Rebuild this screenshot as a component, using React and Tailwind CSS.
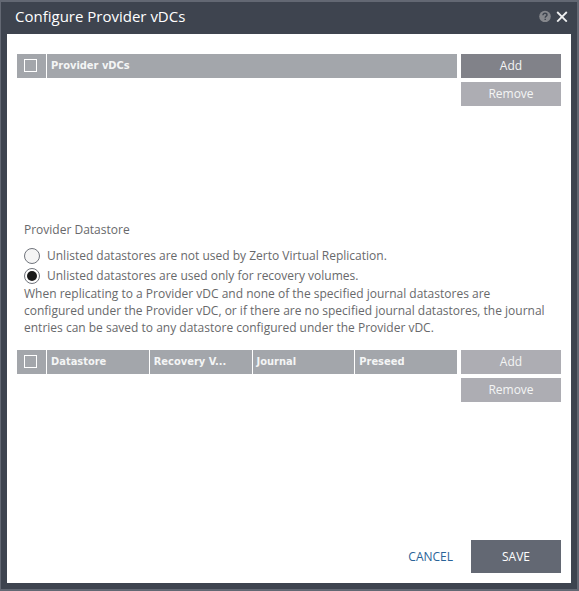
import { useState } from "react";

function HeaderCheckbox({ label }) {
  return (
    <input
      type="checkbox"
      aria-label={label}
      className="mx-[7px] mt-[5px] block size-[13px] appearance-none border border-white checked:bg-white"
    />
  );
}

function ListTable({ name, columns }) {
  return (
    <div className="min-w-0 flex-1">
      <table className="w-full table-fixed border-separate border-spacing-0 bg-[#a3a6ab] text-[11px] leading-4 text-[#f4f5f5]">
        <thead>
          <tr>
            <th scope="col" className="h-6 w-[29px] p-0 align-top">
              <HeaderCheckbox label={`Select all ${name}`} />
            </th>
            {columns.map((column) => (
              <th
                key={column}
                scope="col"
                className="h-6 truncate border-l border-white py-0 pr-2 pl-1 text-left font-['DejaVu_Sans_Condensed','DejaVu_Sans',sans-serif] font-bold"
              >
                {column}
              </th>
            ))}
          </tr>
        </thead>
      </table>
    </div>
  );
}

function ListActions({ addClass }) {
  return (
    <div className="flex w-[100px] shrink-0 flex-col gap-1 leading-4 text-[#f4f5f5]">
      <button type="button" className={`h-6 ${addClass}`}>
        Add
      </button>
      <button type="button" className="h-6 bg-[#adadb3]">
        Remove
      </button>
    </div>
  );
}

function RadioOption({ value, selected, onSelect, children }) {
  return (
    <label className="flex h-[18px] items-center gap-[7px] leading-4">
      <input
        type="radio"
        name="unlisted-datastores"
        value={value}
        checked={selected === value}
        onChange={() => onSelect(value)}
        className="grid size-4 shrink-0 appearance-none place-content-center rounded-full border border-[#70747c] bg-[#f5f5f5] before:hidden before:size-[10px] before:rounded-full before:bg-[#1b1b1b] checked:bg-white checked:before:block"
      />
      <span>{children}</span>
    </label>
  );
}

export default function App() {
  const [mode, setMode] = useState("recovery");

  return (
    <div className="flex min-h-screen flex-col border-t-2 border-r-2 border-b-2 border-l border-[#636873] bg-[#3e444f] px-[6px] pb-[6px] font-['Open_Sans',sans-serif] text-[12px] leading-[17px] text-[#68696b]">
      <header className="flex h-8 items-center justify-between pr-[3px] pb-1 pl-2 text-white">
        <h1 className="text-[15px] leading-6">Configure Provider vDCs</h1>
        <div className="flex items-center gap-[5px]">
          <button type="button" aria-label="Help">
            <svg viewBox="0 0 12 12" className="block size-3">
              <circle cx="6" cy="6.5" r="5.8" fill="#85878c" />
              <path d="M4 5.2C4 3.8 4.8 3.2 6 3.2S8 3.9 8 4.9C8 6.2 6.2 6.1 6.2 7.7M6.2 8.7V10.1" fill="none" stroke="#3e444f" strokeWidth="1.4" />
            </svg>
          </button>
          <button type="button" aria-label="Close">
            <svg viewBox="0 0 12 12" className="block size-3">
              <path d="M1.2 2L10.8 11.6M10.8 2L1.2 11.6" fill="none" stroke="#f0f1f2" strokeWidth="1.8" />
            </svg>
          </button>
        </div>
      </header>

      <main className="flex flex-1 flex-col bg-white px-[10px] pt-5 pb-[10px]">
        <section className="flex min-h-[166px] items-start gap-1">
          <ListTable name="provider vDCs" columns={["Provider vDCs"]} />
          <ListActions addClass="bg-[#818289]" />
        </section>

        <fieldset className="pr-4 pb-[14px] pl-[7px]">
          <legend className="mb-[7px] leading-5">Provider Datastore</legend>
          <div className="flex flex-col gap-[2px]">
            <RadioOption value="unused" selected={mode} onSelect={setMode}>
              Unlisted datastores are not used by Zerto Virtual Replication.
            </RadioOption>
            <RadioOption value="recovery" selected={mode} onSelect={setMode}>
              Unlisted datastores are used only for recovery volumes.
            </RadioOption>
          </div>
          <p>
            When replicating to a Provider vDC and none of the specified journal datastores are
            configured under the Provider vDC, or if there are no specified journal datastores, the
            journal entries can be saved to any datastore configured under the Provider vDC.
          </p>
        </fieldset>

        <section className="flex flex-1 items-start gap-1">
          <ListTable
            name="datastores"
            columns={["Datastore", "Recovery V...", "Journal", "Preseed"]}
          />
          <ListActions addClass="bg-[#adadb3]" />
        </section>

        <footer className="flex items-center justify-end gap-[18px]">
          <button type="button" className="text-[#2a6398]">
            CANCEL
          </button>
          <button type="button" className="h-[33px] w-[90px] bg-[#636873] text-white">
            SAVE
          </button>
        </footer>
      </main>
    </div>
  );
}
